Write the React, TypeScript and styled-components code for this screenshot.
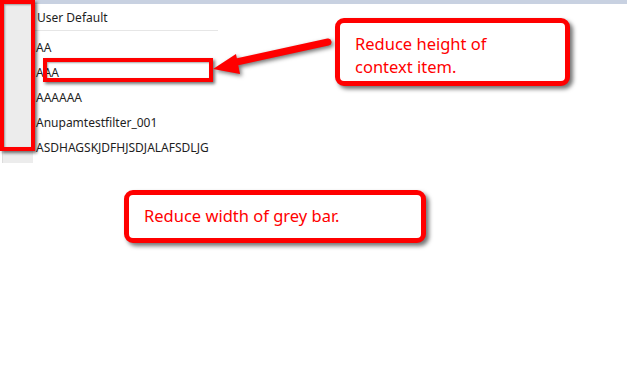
import styled, { createGlobalStyle } from 'styled-components'

// Global

const GlobalStyle = createGlobalStyle`
  html, body {
    margin: 0;
    padding: 0;
    background: #ffffff;
  }
  body {
    font-family: "Noto Sans", "Liberation Sans", sans-serif;
  }
`

// Types

interface IHighlight {
  left: number
  top: number
  width: number
  height: number
}

interface ICallout {
  left: number
  top: number
  width: number
  height: number
}

// Page styles

const Page = styled.div`
  position: relative;
  width: 627px;
  height: 375px;
  overflow: hidden;
  display: flex;
  align-items: flex-start;
`

const Sidebar = styled.div`
  flex: 0 0 31px;
  height: 163px;
  margin-left: 2px;
  background: #ececec;
  border-left: 1px solid #dcdcdc;
  box-sizing: border-box;
`

const Main = styled.div`
  flex: 1;
  display: flex;
  flex-direction: column;
  padding-left: 2px;
`

const TopStrip = styled.div`
  height: 4px;
  background: #c8d1e1;
`

const List = styled.div`
  width: 183px;
  overflow: hidden;
  display: flex;
  flex-direction: column;
`

const Header = styled.div`
  height: 27px;
  box-sizing: border-box;
  padding: 5px 0 0 2px;
  font-size: 12px;
  color: #1e1e1e;
  border-bottom: 1px solid #e6e6e6;
  white-space: nowrap;
`

const Item = styled.div`
  height: 25px;
  line-height: 25px;
  font-size: 12px;
  color: #1e1e1e;
  white-space: nowrap;
  padding-left: 1px;
`

const ItemGap = styled.div`
  height: 4px;
`

// Annotation styles

const Highlight = styled.div<IHighlight>`
  position: absolute;
  left: ${props => props.left}px;
  top: ${props => props.top}px;
  width: ${props => props.width}px;
  height: ${props => props.height}px;
  box-sizing: border-box;
  border: 4px solid #ff0000;
  box-shadow: 2px 2px 3px rgba(0, 0, 0, 0.55), inset 1px 1px 2px rgba(0, 0, 0, 0.35);
`

const Callout = styled.div<ICallout>`
  position: absolute;
  left: ${props => props.left}px;
  top: ${props => props.top}px;
  width: ${props => props.width}px;
  height: ${props => props.height}px;
  box-sizing: border-box;
  background: #ffffff;
  border: 5px solid #ff0000;
  border-radius: 9px;
  box-shadow: 3px 3px 4px rgba(0, 0, 0, 0.55);
  padding: 9px 0 0 15px;
  color: #ff0000;
  font-size: 16.5px;
  line-height: 23px;
`

const Arrow = styled.svg`
  position: absolute;
  left: 0;
  top: 0;
  width: 627px;
  height: 375px;
  pointer-events: none;
  filter: drop-shadow(2px 2px 2px rgba(0, 0, 0, 0.55));
`

const items = ['AA', 'AAA', 'AAAAAA', 'Anupamtestfilter_001', 'ASDHAGSKJDFHJSDJALAFSDLJG']

// Component

export default function App() {
  return (
    <>
      <GlobalStyle />
      <Page>
        <Sidebar />
        <Main>
          <TopStrip />
          <List>
            <Header>User Default</Header>
            <ItemGap />
            {items.map(item => (
              <Item key={item}>{item}</Item>
            ))}
          </List>
        </Main>

        <Highlight left={0} top={0} width={35} height={151} />
        <Highlight left={43} top={58} width={170} height={24} />

        <Arrow viewBox="0 0 627 375">
          <path d="M328 42 L232 63" stroke="#ff0000" strokeWidth="7" strokeLinecap="round" />
          <polygon points="213,69 236,54 240,74" fill="#ff0000" />
        </Arrow>

        <Callout left={335} top={18} width={235} height={68}>
          Reduce height of
          <br />
          context item.
        </Callout>

        <Callout left={124} top={190} width={302} height={53}>
          Reduce width of grey bar.
        </Callout>
      </Page>
    </>
  )
}
